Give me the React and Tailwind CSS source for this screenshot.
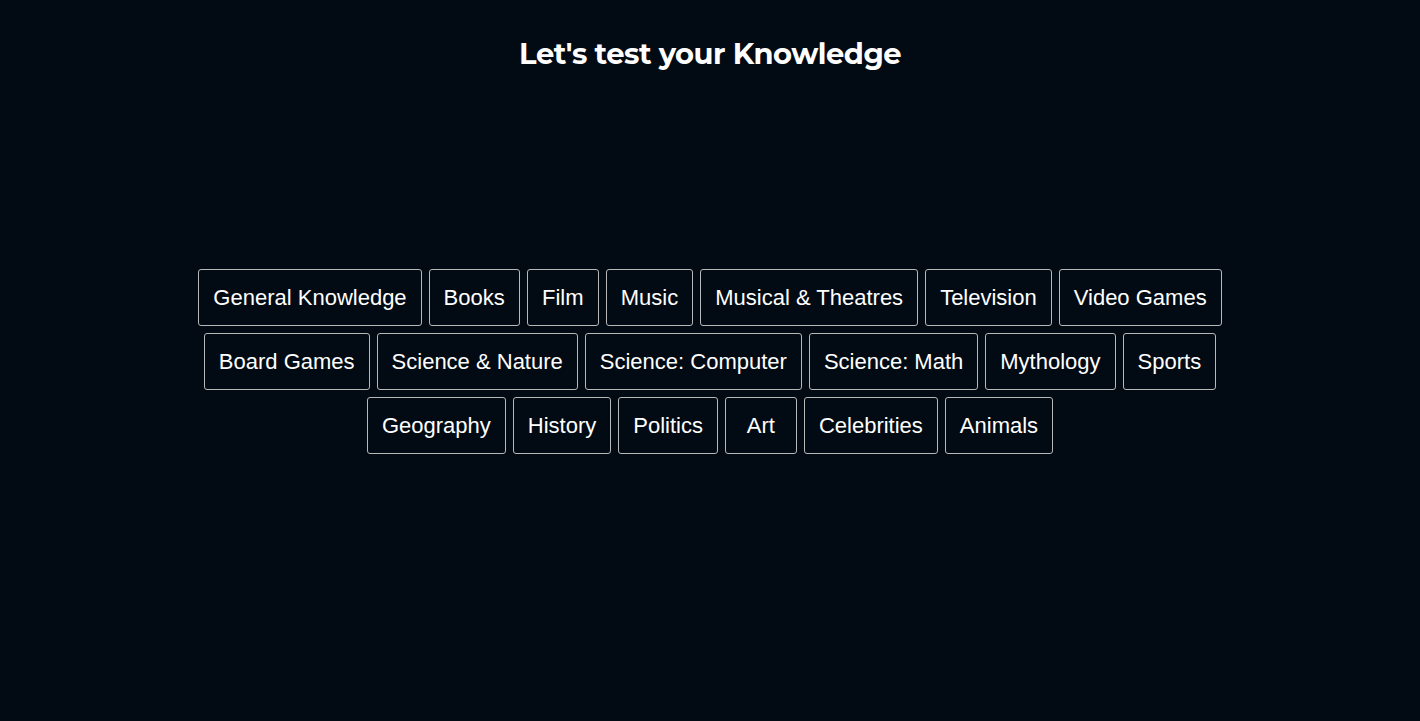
const categories = [
  "General Knowledge",
  "Books",
  "Film",
  "Music",
  "Musical & Theatres",
  "Television",
  "Video Games",
  "Board Games",
  "Science & Nature",
  "Science: Computer",
  "Science: Math",
  "Mythology",
  "Sports",
  "Geography",
  "History",
  "Politics",
  "Art",
  "Celebrities",
  "Animals",
];

export default function App() {
  return (
    <div className="min-h-screen bg-[#020b13] text-white">
      {/* Title */}
      <h1 className="pt-[34px] text-center text-[29px] leading-[40px] font-bold tracking-[-0.5px] font-['Montserrat','Open_Sans',sans-serif]">
        Let's test your Knowledge
      </h1>

      {/* Categories */}
      <div className="mx-auto mt-[195px] flex max-w-[1100px] flex-wrap justify-center gap-x-[7px] gap-y-[7px] font-['Liberation_Sans',Arial,sans-serif]">
        {categories.map((c) => (
          <button
            key={c}
            className="h-[57px] min-w-[72px] rounded-[3px] border border-[#b8b8b8] bg-[#020b13] px-[14px] text-[22px] text-white"
          >
            {c}
          </button>
        ))}
      </div>
    </div>
  );
}
